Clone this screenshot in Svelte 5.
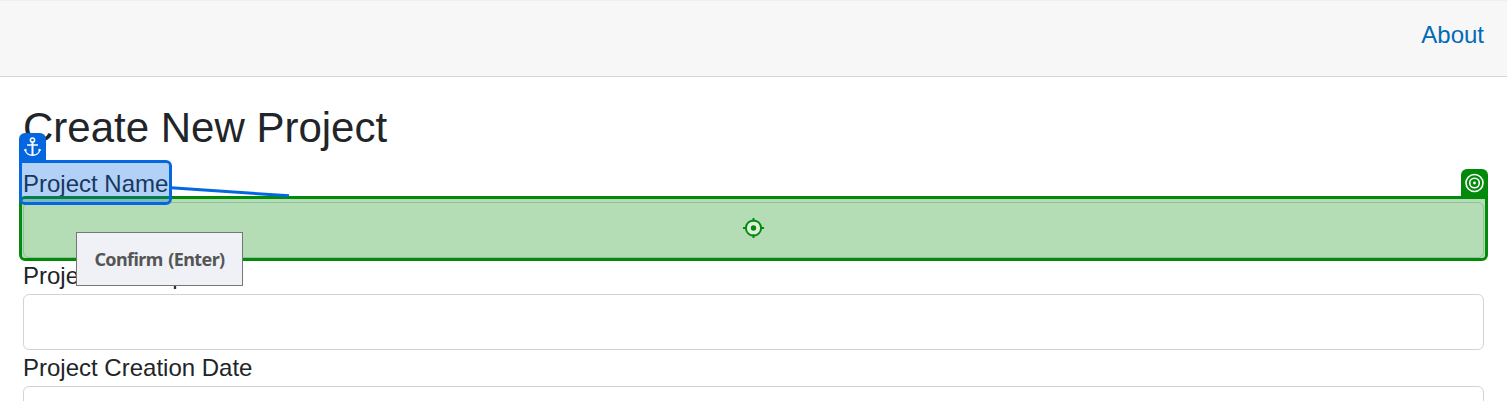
<script>
  const fields = ['Project Name', 'Project Description', 'Project Creation Date'];
</script>

<div class="page">
  <header><a href="#about">About</a></header>
  <main>
    <h1>Create New Project</h1>
    <form>
      {#each fields as field, i}
        <label for={`field-${i}`}><span>{field}</span></label>
        <input id={`field-${i}`} type="text" />
      {/each}
    </form>
  </main>

  <div class="target">
    <svg class="cross" viewBox="0 0 21 21" width="21" height="21">
      <circle cx="10.5" cy="10.5" r="7.6" fill="#dff0df" stroke="#048a0b" stroke-width="2" />
      <circle cx="10.5" cy="10.5" r="2.7" fill="#048a0b" />
      <path d="M10.5 .5v3.5M10.5 17v3.5M0 10.5h4M17 10.5h4" stroke="#048a0b" stroke-width="2" />
    </svg>
  </div>
  <div class="tab target-tab">
    <svg viewBox="0 0 20 20" width="20" height="20" fill="none" stroke="#fff">
      <circle cx="9.5" cy="10" r="8.5" stroke-width="1.6" />
      <circle cx="9.5" cy="10" r="4.8" stroke-width="1.6" />
      <circle cx="9.5" cy="10" r="1.4" fill="#fff" stroke="none" />
    </svg>
  </div>

  <svg class="link" viewBox="0 0 120 12" width="120" height="12">
    <path d="M0 2.8 118 10.8" stroke="#0467e0" stroke-width="3" />
  </svg>
  <div class="anchor"></div>
  <div class="tab anchor-tab">
    <svg viewBox="0 0 17 20" width="17" height="20" fill="none" stroke="#fff" stroke-width="1.5">
      <circle cx="8.5" cy="3" r="2.1" />
      <path d="M8.5 5v13.5" stroke-width="2" />
      <path d="M3 8h11" />
      <path d="M1.2 12.2C1.5 16 4.8 18.3 8.5 18.3s7-2.3 7.3-6.1" />
      <path d="M.5 14 1.2 12 3 13.4M14 13.4 15.8 12 16.5 14" stroke-width=".9" />
    </svg>
  </div>
  <button type="button">Confirm (Enter)</button>
</div>

<style>
  :global(body) { overflow: hidden; }
  .page {
    position: relative;
    height: 401px;
    overflow: hidden;
    background: #fff;
    color: #212529;
    font: 24px/36px "Liberation Sans", Arial, sans-serif;
  }
  header {
    box-sizing: border-box;
    height: 77px;
    display: flex;
    justify-content: flex-end;
    padding: 16px 23px 0;
    background: #f7f7f7;
    border-top: 1px solid #f0f0f0;
    border-bottom: 1px solid #d6d5d5;
  }
  a { color: #006bb7; text-decoration: none; }
  main { padding: 26px 23px 0; }
  h1 { margin: 0 0 13px; font-size: 42px; line-height: 50px; font-weight: 400; }
  form { display: flex; flex-direction: column; }
  label { height: 36px; }
  input {
    box-sizing: border-box;
    height: 56px;
    width: 100%;
    margin: 0;
    border: 1px solid #ced4da;
    border-radius: 6px;
    background: #fff;
  }
  .target, .anchor, .tab, .link, button { position: absolute; box-sizing: border-box; }
  .target {
    left: 19px;
    top: 196px;
    width: 1469px;
    height: 65px;
    display: flex;
    align-items: center;
    justify-content: center;
    border: 3px solid #048a0b;
    border-radius: 6px 0 6px 6px;
    background: rgba(6, 144, 12, .3);
    background-clip: padding-box;
  }
  .cross { display: block; transform: translateY(-.5px); }
  .anchor {
    left: 19px;
    top: 160px;
    width: 153px;
    height: 45px;
    border: 3px solid #0467e0;
    border-radius: 0 6px 6px 6px;
    background: rgba(4, 103, 224, .3);
    background-clip: padding-box;
  }
  .tab {
    width: 27px;
    height: 27px;
    display: flex;
    align-items: center;
    justify-content: center;
    border-radius: 6px 6px 0 0;
  }
  .tab svg { display: block; }
  .anchor-tab { left: 19px; top: 133px; background: #0467e0; }
  .target-tab { left: 1461px; top: 169px; background: #048a0b; }
  .link { left: 171px; top: 185px; }
  button {
    left: 76px;
    top: 232px;
    width: 167px;
    height: 54px;
    padding: 0;
    border: 1px solid #767676;
    background: #f0f1f7;
    color: #555;
    font: 700 18px/24px "Noto Sans", "Open Sans", sans-serif;
    letter-spacing: -.6px;
    word-spacing: 1.5px;
    white-space: nowrap;
  }
</style>
